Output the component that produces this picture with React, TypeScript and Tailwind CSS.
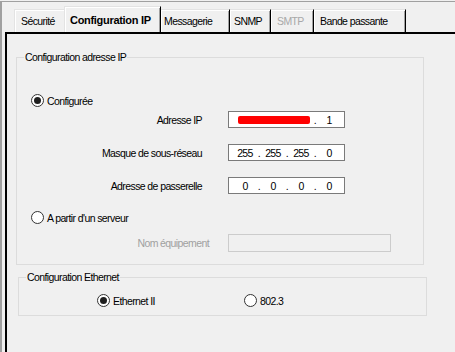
import React from "react";

const font = "font-['Liberation_Sans',Arial,sans-serif]";

function Radio({ checked }: { checked?: boolean }) {
  return (
    <div className="w-[13px] h-[13px] shrink-0 rounded-full border border-[#333333] bg-white flex items-center justify-center">
      {checked ? <div className="w-[7px] h-[7px] rounded-full bg-[#1f1f1f]" /> : null}
    </div>
  );
}

function IpField({ parts }: { parts: string[] }) {
  return (
    <div className="ml-[26px] w-[117px] h-[17px] border border-[#7a7a7a] bg-white flex items-center pl-[5px] text-black">
      <span className="w-[22px] text-center">{parts[0]}</span>
      <span className="w-[6px] text-center">.</span>
      <span className="w-[22px] text-center">{parts[1]}</span>
      <span className="w-[6px] text-center">.</span>
      <span className="w-[22px] text-center">{parts[2]}</span>
      <span className="w-[6px] text-center">.</span>
      <span className="w-[22px] text-center">{parts[3]}</span>
    </div>
  );
}

export default function App() {
  return (
    <div
      className={`w-[455px] h-[352px] bg-[#f0f0f0] overflow-hidden pt-[1px] ${font} text-[10.5px] tracking-[-0.6px] text-black leading-[12px]`}
    >
      <div className="h-[351px] border-t border-l-2 border-[#a0a0a0] flex flex-col">
        {/* Tab strip */}
        <div className="h-[30px] flex items-end pl-[12px]">
          <div className="w-[50px] h-[23px] border-t border-l border-[#e3e3e3] shadow-[inset_1px_1px_0_#ffffff] flex items-center pl-[6px]">
            Sécurité
          </div>
          <div className="w-[97px] h-[26px] border-t border-l border-r border-t-[#e3e3e3] border-l-[#e3e3e3] border-r-black shadow-[inset_1px_1px_0_#ffffff,inset_-1px_0_0_#a0a0a0] flex items-center pl-[5px] font-bold text-[11px] tracking-[-0.3px]">
            Configuration IP
          </div>
          <div className="w-[69px] h-[23px] border-t border-r border-t-[#e3e3e3] border-r-black shadow-[inset_1px_1px_0_#ffffff,inset_-1px_0_0_#a0a0a0] flex items-center pl-[3px]">
            Messagerie
          </div>
          <div className="w-[41px] h-[23px] border-t border-r border-t-[#e3e3e3] border-r-black shadow-[inset_1px_1px_0_#ffffff,inset_-1px_0_0_#a0a0a0] flex items-center pl-[4px]">
            SNMP
          </div>
          <div className="w-[43px] h-[23px] border-t border-r border-t-[#e3e3e3] border-r-black shadow-[inset_1px_1px_0_#ffffff,inset_-1px_0_0_#a0a0a0] flex items-center pl-[6px] text-[#a8a8a8]">
            SMTP
          </div>
          <div className="w-[92px] h-[23px] border-t border-r border-t-[#e3e3e3] border-r-black shadow-[inset_1px_1px_0_#ffffff,inset_-1px_0_0_#a0a0a0] flex items-center pl-[6px]">
            Bande passante
          </div>
        </div>

        {/* Panel */}
        <div className="ml-[3px] flex-1 border-t-2 border-l-2 border-black flex flex-col">
          {/* Group 1 */}
          <div className="relative mt-[23px] ml-[9px] w-[408px] h-[208px] border border-[#dcdcdc] flex flex-col">
            <span className="absolute left-[7px] -top-[7px] px-[1px] bg-[#f0f0f0]">
              Configuration adresse IP
            </span>

            <div className="mt-[36px] ml-[14px] h-[13px] flex items-center gap-[3px]">
              <Radio checked />
              <span>Configurée</span>
            </div>

            <div className="mt-[4px] h-[17px] flex items-center">
              <span className="w-[185px] text-right">Adresse IP</span>
              <div className="ml-[26px] w-[117px] h-[17px] border border-[#7a7a7a] bg-white flex items-center pl-[9px]">
                <span className="w-[72px] h-[8px] rounded-[2px] bg-[#ff0000]" />
                <span className="ml-[2px] w-[6px] text-center">.</span>
                <span className="w-[22px] text-center">1</span>
              </div>
            </div>

            <div className="mt-[16px] h-[17px] flex items-center">
              <span className="w-[185px] text-right">Masque de sous-réseau</span>
              <IpField parts={["255", "255", "255", "0"]} />
            </div>

            <div className="mt-[16px] h-[17px] flex items-center">
              <span className="w-[185px] text-right">Adresse de passerelle</span>
              <IpField parts={["0", "0", "0", "0"]} />
            </div>

            <div className="mt-[17px] ml-[14px] h-[13px] flex items-center gap-[3px]">
              <Radio />
              <span>A partir d'un serveur</span>
            </div>

            <div className="mt-[10px] h-[18px] flex items-center">
              <span className="w-[192px] text-right text-[#a0a0a0]">Nom équipement</span>
              <div className="ml-[19px] w-[163px] h-[18px] border border-[#cccccc] bg-[#f0f0f0]" />
            </div>
          </div>

          {/* Group 2 */}
          <div className="relative mt-[12px] ml-[11px] w-[409px] h-[39px] border border-[#dcdcdc] flex flex-col">
            <span className="absolute left-[7px] -top-[7px] px-[1px] bg-[#f0f0f0]">
              Configuration Ethernet
            </span>
            <div className="mt-[16px] ml-[78px] h-[13px] flex items-center">
              <div className="w-[147px] flex items-center gap-[3px]">
                <Radio checked />
                <span>Ethernet II</span>
              </div>
              <div className="flex items-center gap-[3px]">
                <Radio />
                <span>802.3</span>
              </div>
            </div>
          </div>
        </div>
      </div>
    </div>
  );
}
